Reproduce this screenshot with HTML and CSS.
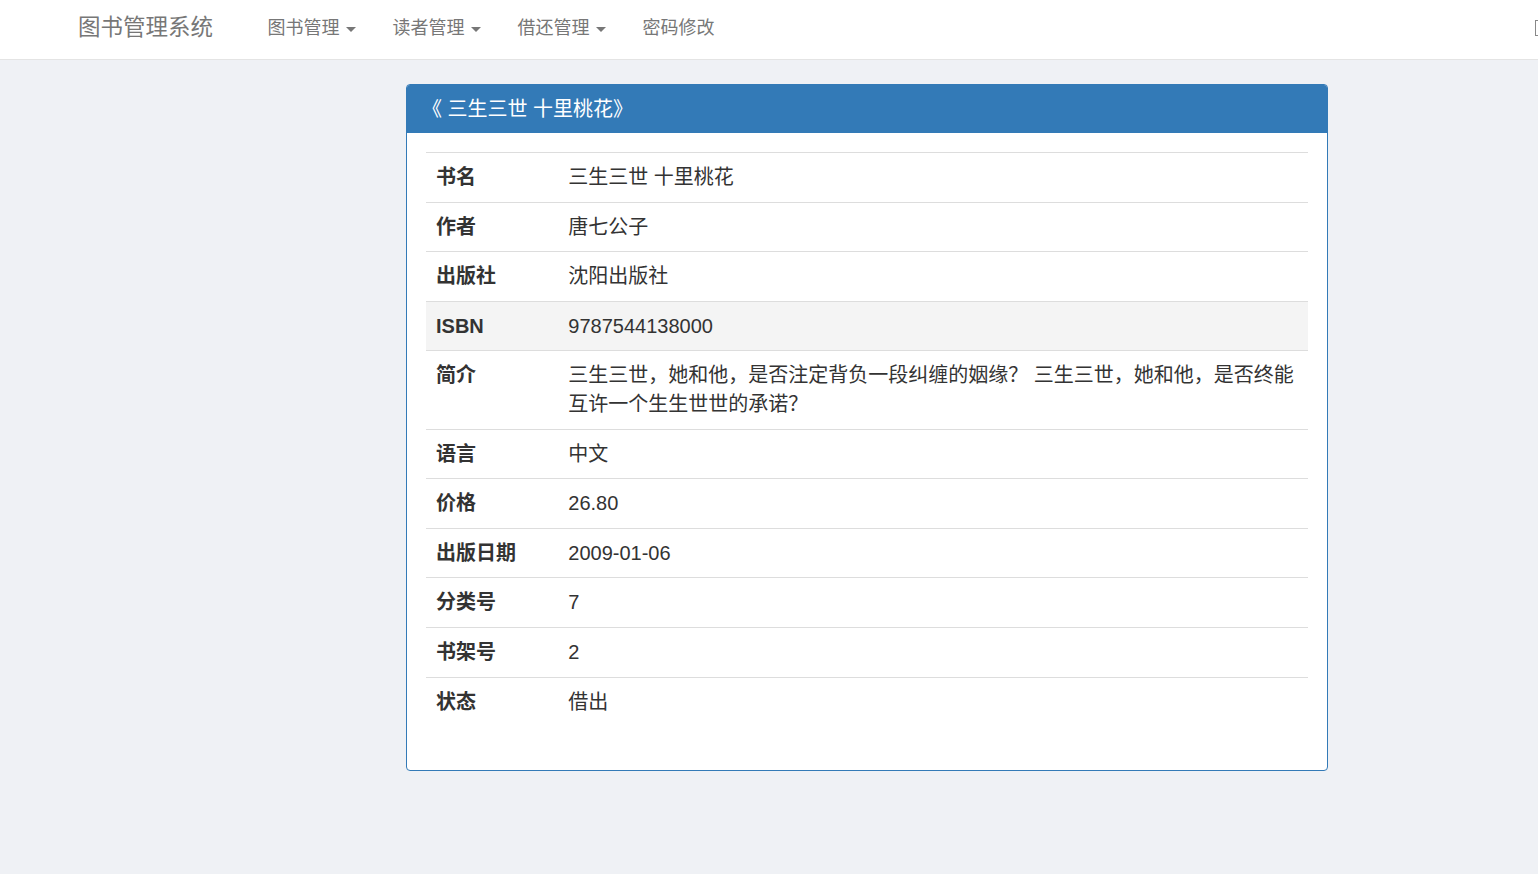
FILE: index.html
```html
<!DOCTYPE html>
<html lang="zh-CN">
<head>
	<meta charset="UTF-8">
	<meta name="viewport" content="width=device-width, initial-scale=1">
	<title>图书详情</title>
	<link rel="stylesheet" href="styles.css">
</head>
<body>

	<nav class="navbar">
		<a class="brand" href="#">图书管理系统</a>
		<ul class="nav">
			<li><a href="#">图书管理<span class="caret"></span></a></li>
			<li><a href="#">读者管理<span class="caret"></span></a></li>
			<li><a href="#">借还管理<span class="caret"></span></a></li>
			<li><a href="#">密码修改</a></li>
		</ul>
		<span class="nav-right"></span>
	</nav>

	<div class="main">
		<div class="panel">
			<div class="panel-heading">《 三生三世 十里桃花》</div>
			<div class="panel-body">
				<table class="detail">
					<colgroup>
						<col class="col-label">
						<col>
					</colgroup>
					<tbody>
						<tr><th>书名</th><td>三生三世 十里桃花</td></tr>
						<tr><th>作者</th><td>唐七公子</td></tr>
						<tr><th>出版社</th><td>沈阳出版社</td></tr>
						<tr class="hover"><th>ISBN</th><td>9787544138000</td></tr>
						<tr><th>简介</th><td>三生三世，她和他，是否注定背负一段纠缠的姻缘？ 三生三世，她和他，是否终能互许一个生生世世的承诺？</td></tr>
						<tr><th>语言</th><td>中文</td></tr>
						<tr><th>价格</th><td>26.80</td></tr>
						<tr><th>出版日期</th><td>2009-01-06</td></tr>
						<tr><th>分类号</th><td>7</td></tr>
						<tr><th>书架号</th><td>2</td></tr>
						<tr><th>状态</th><td>借出</td></tr>
					</tbody>
				</table>
			</div>
		</div>
	</div>

</body>
</html>
```

FILE: styles.css
```css
html, body {
	margin: 0;
	padding: 0;
}
body {
	font-family: "Liberation Sans", "Noto Sans CJK SC", sans-serif;
	background: #eff1f5;
	color: #333;
	overflow-x: hidden;
}
a {
	text-decoration: none;
}
.navbar {
	display: flex;
	align-items: center;
	height: 59px;
	background: #fff;
	border-bottom: 1px solid #e4e4e4;
	padding-left: 78px;
}
.brand {
	font-size: 22.5px;
	line-height: 1;
	color: #777;
	margin-right: 36px;
	margin-bottom: 2px;
}
.nav {
	display: flex;
	list-style: none;
	margin: 0 0 3px;
	padding: 0;
}
.nav a {
	display: block;
	font-size: 18px;
	line-height: 1;
	color: #777;
	padding: 0 18.5px;
}
.caret {
	display: inline-block;
	width: 0;
	height: 0;
	margin-left: 6px;
	vertical-align: middle;
	border-top: 5px solid #777;
	border-left: 5px solid transparent;
	border-right: 5px solid transparent;
}
.nav-right {
	margin-left: auto;
	width: 2px;
	height: 14px;
	border: 1px solid #888;
	border-right: none;
	margin-bottom: 4px;
}
.main {
	padding: 24px 0 40px 406px;
}
.panel {
	width: 920px;
	background: #fff;
	border: 1px solid #337ab7;
	border-radius: 4px;
}
.panel-heading {
	background: #337ab7;
	color: #fff;
	font-size: 20px;
	line-height: 28px;
	padding: 10px 15px;
	border-radius: 3px 3px 0 0;
}
.panel-body {
	padding: 19px 19px 24px;
}
.detail {
	width: 100%;
	border-collapse: collapse;
	margin-bottom: 20px;
	font-size: 20px;
	line-height: 28.6px;
}
.col-label {
	width: 15%;
}
.detail th, .detail td {
	padding: 10px;
	text-align: left;
	vertical-align: top;
	border-top: 1px solid #ddd;
}
.detail th {
	font-weight: bold;
}
.detail tr.hover {
	background: #f4f4f4;
}
```
